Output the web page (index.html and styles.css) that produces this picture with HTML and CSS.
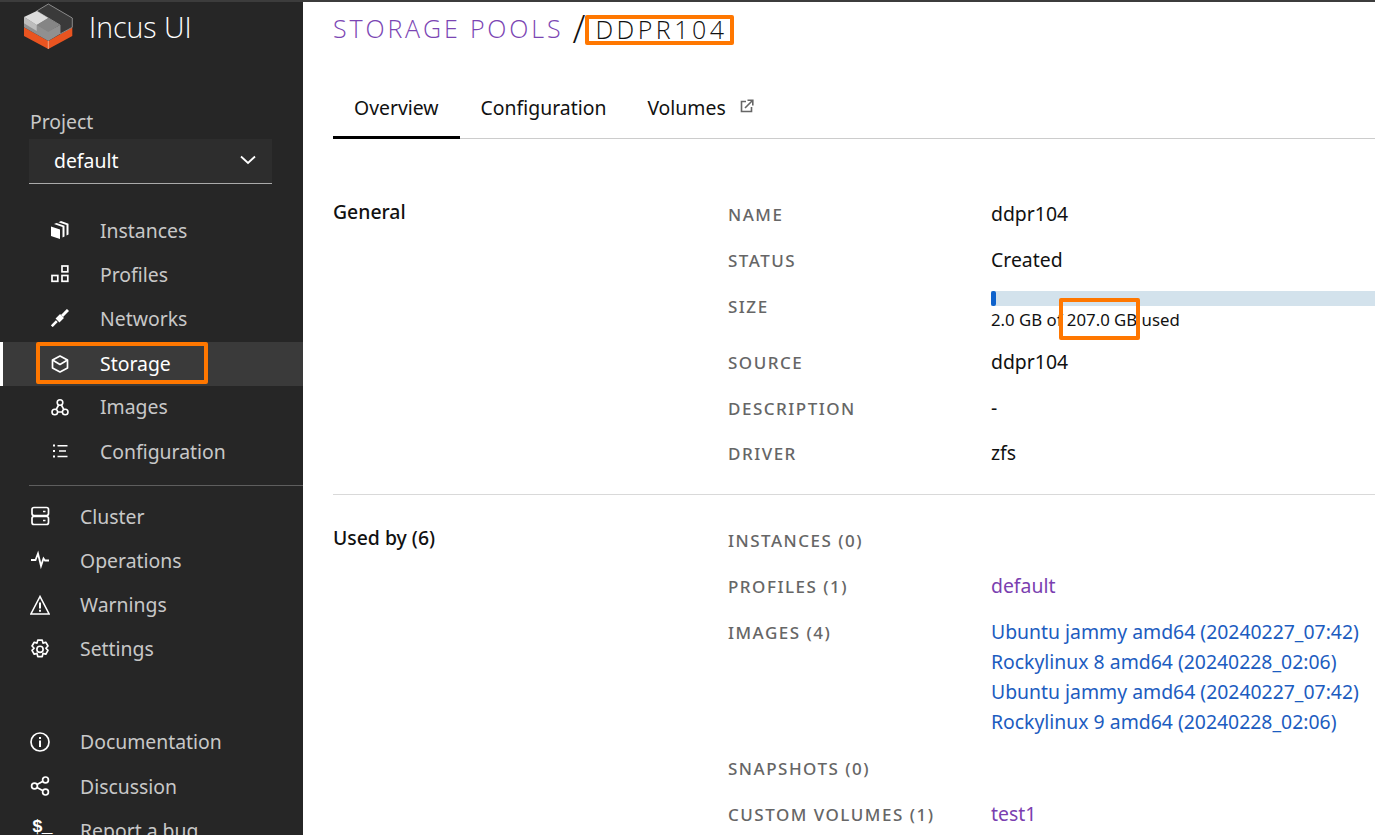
FILE: index.html
```html
<!DOCTYPE html>
<html lang="en">
<head>
    <meta charset="UTF-8">
    <meta name="viewport" content="width=device-width, initial-scale=1.0">
    <title>Incus UI</title>
    <link rel="stylesheet" href="styles.css">
</head>
<body>
    <div class="app">
        <aside class="sidebar">
            <div class="brand">
                <svg class="brand-logo" width="50" height="46" viewBox="0 0 50 46">
                    <polygon points="0,24.300 24.300,38 48.300,24.300 48.300,33 24.300,46 0,33" fill="#e95420"/>
                    <polygon points="24.300,1 48.300,15 48.300,24.300 36,31 36,22 12.700,8" fill="#3a3a3a" stroke="#8a8a8a"/>
                    <polygon points="0,14 24.300,28 36,22 36,31 24.300,38 0,24.300" fill="#909090"/>
                    <polygon points="12.700,22 24.300,15 36,22 24.300,29" fill="#858585"/>
                    <polygon points="12.700,8 24.300,15 12.700,22 0,14" fill="#dcdcdc"/>
                    <polygon points="0,14 12.700,22 12.700,28 0,20.300" fill="#bdbdbd"/>
                    <line x1="24.300" y1="38" x2="24.300" y2="46" stroke="#f0a080"/>
                </svg>
                <span class="brand-name">Incus UI</span>
            </div>

            <div class="project-label">Project</div>
            <div class="project-select">
                <span>default</span>
                <svg width="18" height="10" viewBox="0 0 18 10"><polyline points="2,1.500 9,8 16,1.500" fill="none" stroke="#fff" stroke-width="1.800"/></svg>
            </div>

            <nav class="nav nav-sub">
                <a class="nav-item">
                    <svg class="icon" viewBox="0 0 18 18"><path d="M0 5.500l9 3V18l-9-3zM3 3l8.500 3v10.500l2-1V4.700L5.500 2zM7.500 1.200l8 2.800v10.500l2-1V2.700L10 0z" fill="#fff"/></svg>
                    Instances
                </a>
                <a class="nav-item">
                    <svg class="icon" viewBox="0 0 18 18"><g fill="none" stroke="#fff" stroke-width="1.700"><rect x="11" y="1" width="5.800" height="5.800"/><rect x="1" y="10.500" width="5.800" height="5.800"/><rect x="11" y="10.500" width="5.800" height="5.800"/></g></svg>
                    Profiles
                </a>
                <a class="nav-item">
                    <svg class="icon" viewBox="0 0 18 18"><g stroke="#fff" fill="none"><path d="M.8 17.200l5-5" stroke-width="2.600"/><path d="M6.500 11.500l4.500-4.500" stroke-width="5.500"/><path d="M11 7l6-6" stroke-width="3"/></g></svg>
                    Networks
                </a>
                <a class="nav-item is-active">
                    <svg class="icon" viewBox="0 0 18 18"><g fill="none" stroke="#fff" stroke-width="1.700" stroke-linejoin="round"><path d="M9 1l7.500 4v8L9 17l-7.500-4V5z"/><path d="M1.500 5L9 9.500 16.500 5"/></g></svg>
                    Storage
                    <span class="mark-nav"></span>
                </a>
                <a class="nav-item">
                    <svg class="icon" viewBox="0 0 18 18"><g fill="none" stroke="#fff" stroke-width="1.600"><circle cx="9" cy="4.500" r="2.800"/><circle cx="3.800" cy="14" r="2.800"/><circle cx="14.200" cy="14" r="2.800"/><path d="M6.600 14h4.800M7.600 7L5.200 11.500M10.400 7l2.400 4.500"/></g></svg>
                    Images
                </a>
                <a class="nav-item">
                    <svg class="icon" viewBox="0 0 18 18"><path d="M2 2.500h2v2H2zM2 8h2v2H2zM2 13.500h2v2H2zM6.500 3h10v1.500h-10zM8 8.300h7v1.500H8zM6.500 13.800h10v1.500h-10z" fill="#fff"/></svg>
                    Configuration
                </a>
            </nav>

            <nav class="nav nav-main">
                <a class="nav-item">
                    <svg class="icon" viewBox="0 0 20 20"><g fill="none" stroke="#fff" stroke-width="1.700"><rect x="2" y="1.500" width="16.500" height="8" rx="2"/><rect x="2" y="10.500" width="16.500" height="8" rx="2"/></g><path d="M13 4.700h2.500v1.600H13zM13 13.700h2.500v1.600H13z" fill="#fff"/></svg>
                    Cluster
                </a>
                <a class="nav-item">
                    <svg class="icon" viewBox="0 0 20 20"><polyline points="1,10 5.500,10 8,3.500 11,16 13.500,8.500 15,10.500 19,10.500" fill="none" stroke="#fff" stroke-width="1.800"/></svg>
                    Operations
                </a>
                <a class="nav-item">
                    <svg class="icon" viewBox="0 0 20 20"><path d="M10 1.500L.9 19h18.200z" fill="none" stroke="#fff" stroke-width="1.600"/><path d="M9 7.500h2v6H9zM9 14.700h2v2H9z" fill="#fff"/></svg>
                    Warnings
                </a>
                <a class="nav-item">
                    <svg class="icon" viewBox="1 .5 18 18"><g fill="none" stroke="#fff" stroke-width="1.500" stroke-linejoin="round"><path d="M8 1.500h4l.7 2.700 2.500-.8 2 3.400-1.900 2 1.900 2-2 3.400-2.500-.8-.7 2.900H8l-.7-2.900-2.500.8-2-3.400 1.900-2-1.900-2 2-3.400 2.500.8z"/><circle cx="10" cy="9.800" r="2.800"/></g></svg>
                    Settings
                </a>
            </nav>

            <nav class="nav nav-links">
                <a class="nav-item">
                    <svg class="icon" viewBox="0 0 20 20"><circle cx="10" cy="10" r="9" fill="none" stroke="#fff" stroke-width="1.700"/><path d="M9 8.500h2v6.500H9zM9 5h2v2H9z" fill="#fff"/></svg>
                    Documentation
                </a>
                <a class="nav-item">
                    <svg class="icon" viewBox="0 0 20 20"><g fill="none" stroke="#fff" stroke-width="1.700"><circle cx="4.500" cy="10" r="2.900"/><circle cx="15.500" cy="3.900" r="2.900"/><circle cx="15.500" cy="16.100" r="2.900"/><path d="M7 8.600l6-3.300M7 11.400l6 3.300"/></g></svg>
                    Discussion
                </a>
                <a class="nav-item">
                    <span class="icon icon-text">$_</span>
                    Report a bug
                </a>
            </nav>
        </aside>

        <main class="content">
            <h1 class="page-title">
                <a class="crumb">STORAGE POOLS</a>
                <span class="slash">/</span>
                <span class="mark-title">DDPR104</span>
            </h1>

            <div class="tabs">
                <a class="tab is-current">Overview</a>
                <a class="tab">Configuration</a>
                <a class="tab tab-last">
                    Volumes
                    <svg class="ext" width="14" height="14" viewBox="0 0 14 14"><path d="M6 2.500H1.500v10h10V8" fill="none" stroke="#666" stroke-width="1.600"/><path d="M5 9l7-7M7.500 1.200h5.300v5.300" fill="none" stroke="#666" stroke-width="1.600"/></svg>
                </a>
            </div>

            <section class="section section-general">
                <h2 class="section-title">General</h2>
                <div class="rows">
                    <div class="row"><div class="key">NAME</div><div class="val">ddpr104</div></div>
                    <div class="row"><div class="key">STATUS</div><div class="val">Created</div></div>
                    <div class="row row-size">
                        <div class="key">SIZE</div>
                        <div class="val">
                            <div class="meter"><div class="meter-fill" style="width: 0.98%"></div></div>
                            <div class="meter-text">2.0 GB of <span class="mark-size">207.0 GB</span> used</div>
                        </div>
                    </div>
                    <div class="row"><div class="key">SOURCE</div><div class="val">ddpr104</div></div>
                    <div class="row row-short"><div class="key">DESCRIPTION</div><div class="val">-</div></div>
                    <div class="row"><div class="key">DRIVER</div><div class="val">zfs</div></div>
                </div>
            </section>

            <section class="section section-used">
                <h2 class="section-title">Used by (6)</h2>
                <div class="rows">
                    <div class="row"><div class="key">INSTANCES (0)</div><div class="val"></div></div>
                    <div class="row"><div class="key">PROFILES (1)</div><div class="val"><a class="visited">default</a></div></div>
                    <div class="row">
                        <div class="key">IMAGES (4)</div>
                        <div class="val link-list">
                            <a class="link">Ubuntu jammy amd64 (20240227_07:42)</a>
                            <a class="link">Rockylinux 8 amd64 (20240228_02:06)</a>
                            <a class="link">Ubuntu jammy amd64 (20240227_07:42)</a>
                            <a class="link">Rockylinux 9 amd64 (20240228_02:06)</a>
                        </div>
                    </div>
                    <div class="row"><div class="key">SNAPSHOTS (0)</div><div class="val"></div></div>
                    <div class="row"><div class="key">CUSTOM VOLUMES (1)</div><div class="val"><a class="visited">test1</a></div></div>
                </div>
            </section>
        </main>
    </div>
</body>
</html>
```

FILE: styles.css
```css
* {
    box-sizing: border-box;
}

html, body {
    height: 100%;
}

body {
    margin: 0;
    overflow: hidden;
    font-family: "Noto Sans", sans-serif;
    font-size: 19.400px;
    color: #111;
    background-color: #fff;
}

.app {
    display: flex;
    height: 835px;
    border-top: 2px solid #3c3c3c;
    overflow: hidden;
}

/* sidebar */
.sidebar {
    width: 303px;
    flex-shrink: 0;
    background-color: #262626;
    color: #c8c8c8;
}

.brand {
    display: flex;
    align-items: center;
    height: 48px;
    padding-left: 24px;
}

.brand-logo {
    margin-right: 15px;
}

.brand-name {
    margin-top: 2px;
    font-size: 28.500px;
    font-weight: 300;
    color: #fff;
    font-family: "Open Sans", sans-serif;
}

.project-label {
    margin: 56px 0 1px 30px;
    line-height: 32px;
}

.project-select {
    display: flex;
    justify-content: space-between;
    align-items: center;
    width: 243px;
    height: 45px;
    margin-left: 29px;
    padding: 0 15px 2px 25px;
    background-color: #2d2d2d;
    border-bottom: 1px solid #aaa;
    color: #fff;
}

.nav-item {
    position: relative;
    display: flex;
    align-items: center;
    height: 44.200px;
    padding-bottom: 2px;
}

.nav-sub {
    margin-top: 25px;
    padding-bottom: 11px;
    margin-left: 29px;
    border-bottom: 1px solid #5e5e5e;
}

.nav-sub .nav-item {
    margin-left: -29px;
    padding-left: 51px;
}

.nav-sub .icon {
    width: 18px;
    height: 18px;
    margin-right: 31px;
}

.nav-main, .nav-links {
    padding-left: 30px;
}

.nav-main {
    margin-top: 9px;
}

.nav-links {
    margin-top: 49px;
}

.nav-main .icon, .nav-links .icon {
    margin-right: 30px;
}

.icon {
    width: 20px;
    height: 20px;
    flex-shrink: 0;
}

.icon-text {
    margin-top: -6px;
    padding-left: 2px;
    font-family: "Liberation Mono", monospace;
    font-size: 18px;
    font-weight: 700;
    line-height: 20px;
    color: #fff;
    letter-spacing: -1px;
}

.nav-sub .is-active {
    background-color: #3a3a3a;
    color: #fff;
    border-left: 3px solid #fff;
    padding-left: 48px;
    padding-bottom: 0;
}

.mark-nav {
    position: absolute;
    left: 33px;
    top: 0;
    width: 172px;
    height: 42px;
    border: 4px solid #f70;
    border-radius: 2px;
}

/* main area */
.content {
    flex: 1;
    min-width: 0;
    padding-left: 30px;
}

.page-title {
    display: flex;
    align-items: center;
    height: 56px;
    margin: 0;
    padding-bottom: 4px;
    font-size: 25px;
    font-weight: 300;
    font-family: "Open Sans", sans-serif;
}

.crumb {
    color: #7b45b3;
    letter-spacing: 2.850px;
}

.slash {
    margin: 0 0 0 9px;
    font-size: 38px;
    line-height: 40px;
}

.mark-title {
    position: relative;
    top: 2px;
    height: 30px;
    padding: 0 3px 0 6px;
    border: 4px solid #f70;
    border-radius: 2px;
    letter-spacing: 3.500px;
    line-height: 21px;
}

.tabs {
    display: flex;
    height: 81px;
    border-bottom: 1px solid #ccc;
}

.tab {
    display: flex;
    align-items: flex-start;
    height: 81px;
    padding: 35px 21px 0;
    line-height: 30px;
}

.tab-last {
    margin-left: -1px;
}

.tab.is-current {
    border-bottom: 3px solid #000;
}

.ext {
    margin: 6px 0 0 14px;
}

.section {
    display: flex;
    border-bottom: 1px solid #d9d9d9;
}

.section-general {
    padding: 60px 0 10px;
}

.section-used {
    padding: 30px 0 0;
    border-bottom: 0;
}

.section-title {
    width: 395px;
    margin: -2px 0 0;
    font-size: 19.400px;
    font-weight: 500;
    line-height: 30px;
}

.rows {
    flex: 1;
    min-width: 0;
}

.row {
    display: flex;
    min-height: 46px;
}

.key {
    width: 263px;
    flex-shrink: 0;
    font-size: 17px;
    font-weight: 500;
    letter-spacing: 1.500px;
    color: #666;
    line-height: 32px;
}

.val {
    flex: 1;
    min-width: 0;
    line-height: 30px;
}

.row-size {
    min-height: 56px;
}

.row-short {
    min-height: 45px;
}

.meter {
    height: 15px;
    background-color: #d3e2ec;
}

.meter-fill {
    height: 100%;
    min-width: 5px;
    background-color: #0e62cc;
    border-radius: 2px;
}

.meter-text {
    margin-top: 1px;
    font-size: 16.800px;
    line-height: 26px;
}

.mark-size {
    position: relative;
}

.mark-size::after {
    content: "";
    position: absolute;
    left: -8px;
    right: -3px;
    top: -10px;
    bottom: -9px;
    border: 4px solid #f70;
    border-radius: 2px;
}

.link-list {
    display: flex;
    flex-direction: column;
    padding-bottom: 16px;
}

.link {
    color: #1c5cc0;
}

.visited {
    color: #7b3fb0;
}
```
